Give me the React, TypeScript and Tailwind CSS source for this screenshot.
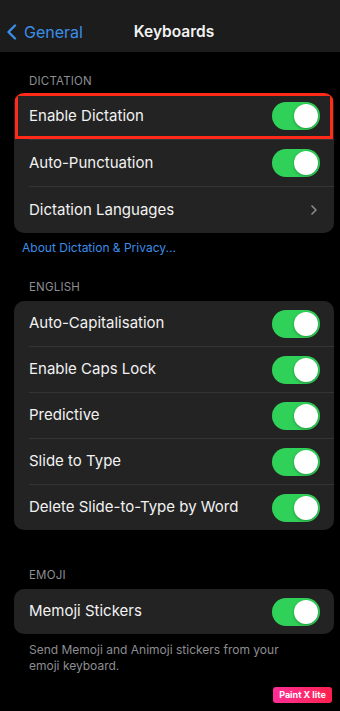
import { ChevronRight } from "lucide-react";

const english = [
  "Auto-Capitalisation",
  "Enable Caps Lock",
  "Predictive",
  "Slide to Type",
  "Delete Slide-to-Type by Word",
];

function Toggle() {
  return (
    <div className="flex h-[28px] w-[48px] items-center justify-end rounded-full bg-[#30d158] p-[2px]">
      <div className="size-[24px] rounded-full bg-white shadow-[0_1px_3px_rgba(0,0,0,0.3)]" />
    </div>
  );
}

function Row({ label, h, toggle = true, children }: { label: string; h: string; toggle?: boolean; children?: React.ReactNode }) {
  return (
    <div className={`relative flex items-center justify-between pl-[15px] pr-[14px] ${h}`}>
      <span className="text-[15px] text-[#f2f2f2]">{label}</span>
      {toggle ? <Toggle /> : <ChevronRight className="mr-[-2px] size-[16px] text-[#8a8a8e]" strokeWidth={2.5} />}
      {children}
    </div>
  );
}

function Divider() {
  return <div className="ml-[15px] h-px bg-[#343436]" />;
}

function Label({ children }: { children: React.ReactNode }) {
  return <div className="pl-[15px] text-[11.5px] leading-[13px] tracking-[0.2px] text-[#8d8d92]">{children}</div>;
}

export default function App() {
  return (
    <div className="relative h-[711px] w-[340px] overflow-hidden bg-black font-['Inter',sans-serif]">
      <header className="h-[52px] bg-[#1c1c1c]">
        <div className="grid h-full w-[348px] grid-cols-[1fr_auto_1fr] items-center pt-[12px]">
          <div className="flex items-center gap-[6px] pl-[6px] text-[#3b8ee8]">
            <svg width="12" height="16" viewBox="0 0 12 16" fill="none">
              <path d="M9 1.5 2.5 8 9 14.5" stroke="currentColor" strokeWidth="2.4" strokeLinecap="round" strokeLinejoin="round" />
            </svg>
            <span className="text-[16px]">General</span>
          </div>
          <h1 className="text-[15.5px] font-semibold text-[#f2f2f2]">Keyboards</h1>
          <div />
        </div>
      </header>

      <main className="pl-[14px] pr-[6px]">
        <div className="mt-[23px] mb-[5px]">
          <Label>DICTATION</Label>
        </div>
        <section className="overflow-hidden rounded-[10px] bg-[#232323]">
          <Row label="Enable Dictation" h="h-[46px]">
            <div className="absolute inset-0 left-[1px] right-[1px] border-[3px] border-[#ff2a17]" />
          </Row>
          <Divider />
          <Row label="Auto-Punctuation" h="h-[46px]" />
          <Divider />
          <Row label="Dictation Languages" h="h-[46px]" toggle={false} />
        </section>

        <p className="mt-[8px] pl-[8px] text-[12px] leading-[14px] text-[#3b8ee8]">About Dictation &amp; Privacy...</p>

        <div className="mt-[26px] mb-[7px]">
          <Label>ENGLISH</Label>
        </div>
        <section className="overflow-hidden rounded-[10px] bg-[#232323]">
          {english.map((t, i) => (
            <div key={t}>
              {i > 0 && <Divider />}
              <Row label={t} h="h-[45px]" />
            </div>
          ))}
        </section>

        <div className="mt-[39px] mb-[7px]">
          <Label>EMOJI</Label>
        </div>
        <section className="overflow-hidden rounded-[10px] bg-[#232323]">
          <Row label="Memoji Stickers" h="h-[45px]" />
        </section>
        <p className="mt-[8px] pl-[15px] pr-[30px] text-[12px] leading-[16px] text-[#8d8d92]">
          Send Memoji and Animoji stickers from your emoji keyboard.
        </p>
      </main>

      <div className="absolute left-[273px] top-[687px] flex h-[16px] w-[59px] items-center justify-center rounded-[3px] bg-gradient-to-r from-[#ff2d95] to-[#ff1f4b] text-[9px] font-bold text-white">
        Paint X lite
      </div>
    </div>
  );
}
